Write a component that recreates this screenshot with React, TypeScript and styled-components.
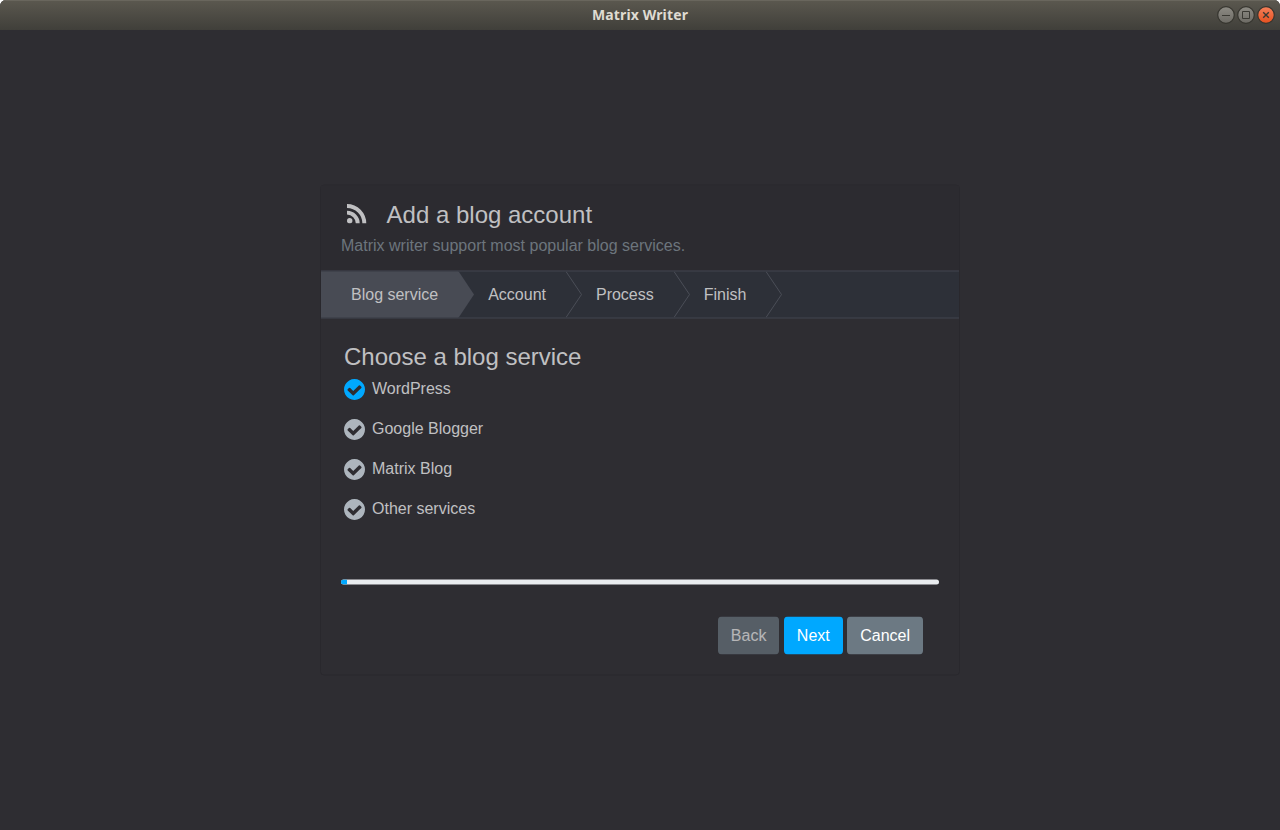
import React from "react";
import styled, { createGlobalStyle } from "styled-components";

const Global = createGlobalStyle`
  * { box-sizing: border-box; }
  body { margin: 0; background: #fff; font-family: "Liberation Sans", Arial, sans-serif; font-size: 16px; line-height: 24px; color: #c0c0c2; }
  h1, h2, p, ol, ul { margin: 0; padding: 0; list-style: none; font-weight: 400; }
`;

const Window = styled.div`
  height: 830px;
  display: flex;
  flex-direction: column;
  overflow: hidden;
  border-radius: 6px 6px 0 0;
  background: #2e2d32;
`;
const TitleBar = styled.header`
  height: 30px;
  flex: none;
  display: grid;
  grid-template-columns: 1fr auto 1fr;
  align-items: center;
  padding-right: 5px;
  background: linear-gradient(#5b584f, #403f3a);
  box-shadow: inset 0 1px #69665d;
`;
const WindowTitle = styled.div`
  grid-column: 2;
  padding-left: 5px;
  font: 700 14px/30px "Noto Sans", "Open Sans", sans-serif;
  letter-spacing: 0.13px;
  color: #dfdbd2;
`;
const Controls = styled.div`
  display: flex;
  justify-content: flex-end;
  gap: 2px;
`;
const Control = styled.svg`
  display: block;
  width: 18px;
  height: 18px;
`;
const Stage = styled.main`
  flex: 1;
  display: flex;
  align-items: flex-start;
  justify-content: center;
  padding-top: 154px;
`;
const Card = styled.section`
  width: 640px;
  height: 491px;
  display: flex;
  flex-direction: column;
  border: 1px solid #29282d;
  border-radius: 4px;
  transform: translateY(0.5px);
`;
const CardHeader = styled.div`
  height: 85px;
  padding: 11px 20px 12px;
  background: #2c2b30;
`;
const Heading = styled.h1`
  display: flex;
  align-items: center;
  height: 36px;
  padding-left: 6px;
  font-size: 24px;
  line-height: 36px;
`;
const FeedIcon = styled.svg`
  width: 20px;
  height: 20px;
  margin: -2px 19.6px 0 0;
  fill: #c0c0c2;
`;
const Subtitle = styled.p`
  padding-top: 1px;
  color: #6c757d;
`;
const Steps = styled.ol`
  display: flex;
  height: 48px;
  background: #2d3038;
  border: solid #42444f;
  border-width: 1px 0;
`;
const Step = styled.li<{ $active?: boolean }>`
  position: relative;
  padding: 0 20px 0 30px;
  line-height: 46px;
  background: ${(p) => (p.$active ? "#484b54" : "transparent")};
`;
const Arrow = styled.svg<{ $active?: boolean }>`
  position: absolute;
  left: 100%;
  top: 0;
  width: 17px;
  height: 46px;
  fill: ${(p) => (p.$active ? "#484b54" : "none")};
  stroke: ${(p) => (p.$active ? "none" : "#4b4e57")};
`;
const Body = styled.div`
  flex: 1;
  padding: 20px 20px 0;
`;
const Question = styled.h2`
  padding-left: 3px;
  font-size: 24px;
  line-height: 36px;
`;
const Options = styled.ul`
  padding-left: 3px;
`;
const Option = styled.li`
  display: flex;
  gap: 7px;
  height: 40px;
`;
const CheckIcon = styled.svg<{ $on?: boolean }>`
  width: 21px;
  height: 22px;
  margin-top: 4px;
  fill: ${(p) => (p.$on ? "#00a8ff" : "#adb5bd")};
`;
const Label = styled.span`
  padding-top: 2px;
`;
const Track = styled.div`
  height: 5px;
  margin-top: 45px;
  border-radius: 3px;
  overflow: hidden;
  background: #e9ecef;
`;
const Fill = styled.div`
  width: 1%;
  height: 100%;
  background: #00a8ff;
`;
const Actions = styled.div`
  display: flex;
  justify-content: flex-end;
  gap: 4.45px;
  padding: 32px 16px 0 0;
`;
const Button = styled.button<{ $primary?: boolean }>`
  height: 38px;
  padding: 6px 12px;
  border: 1px solid transparent;
  border-radius: 4px;
  font: inherit;
  color: #fff;
  background: ${(p) => (p.$primary ? "#00a8ff" : "#6c7983")};
  &:disabled { opacity: 0.65; }
`;

const steps = ["Blog service", "Account", "Process", "Finish"];
const services = ["WordPress", "Google Blogger", "Matrix Blog", "Other services"];

const controls = [
  { name: "minimize", fill: "url(#grey)", glyph: <path d="M5 9.5h8" /> },
  { name: "maximize", fill: "url(#grey)", glyph: <path d="M5.5 5.5h7v7h-7z" /> },
  { name: "close", fill: "url(#orange)", glyph: <path d="M6.2 6.2l5.6 5.6m0-5.6l-5.6 5.6" strokeWidth="1.4" /> },
];

export default function App() {
  return (
    <Window>
      <Global />
      <TitleBar>
        <WindowTitle>Matrix Writer</WindowTitle>
        <Controls>
          {controls.map((c) => (
            <Control key={c.name} viewBox="0 0 18 18" aria-label={c.name}>
              <defs>
                <linearGradient id="grey" x2="0" y2="1">
                  <stop stopColor="#8d8b84" />
                  <stop offset="1" stopColor="#6c6a64" />
                </linearGradient>
                <linearGradient id="orange" x2="0" y2="1">
                  <stop stopColor="#f5805a" />
                  <stop offset="1" stopColor="#e6501f" />
                </linearGradient>
              </defs>
              <circle cx="9" cy="9" r="8.3" fill={c.fill} stroke="#36352f" strokeWidth="1.2" />
              <g fill="none" stroke="#3a3933">{c.glyph}</g>
            </Control>
          ))}
        </Controls>
      </TitleBar>
      <Stage>
        <Card>
          <CardHeader>
            <Heading>
              <FeedIcon viewBox="0 -0.6 20 20">
                <circle cx="2.7" cy="16.6" r="2.7" />
                <path d="M0 0A19.3 19.3 0 0 1 19.3 19.3H15.4A15.4 15.4 0 0 0 0 3.9zM0 6.6A12.7 12.7 0 0 1 12.7 19.3H8.8A8.8 8.8 0 0 0 0 10.5z" />
              </FeedIcon>
              Add a blog account
            </Heading>
            <Subtitle>Matrix writer support most popular blog services.</Subtitle>
          </CardHeader>
          <Steps>
            {steps.map((s, i) => (
              <Step key={s} $active={i === 0}>
                {s}
                <Arrow $active={i === 0} viewBox="0 0 17 46">
                  <path d={i === 0 ? "M0 0H.7L16 23L.7 46H0z" : "M0 0L15.5 23L0 46"} />
                </Arrow>
              </Step>
            ))}
          </Steps>
          <Body>
            <Question>Choose a blog service</Question>
            <Options>
              {services.map((s, i) => (
                <Option key={s}>
                  <CheckIcon $on={i === 0} viewBox="128 91 1536 1609">
                    <path d="M1412 734q0-28-18-46l-91-90q-19-19-45-19t-45 19l-408 407-226-226q-19-19-45-19t-45 19l-91 90q-18 18-18 46 0 27 18 45l362 362q19 19 45 19 27 0 46-19l543-543q18-18 18-45zm252 162q0 209-103 385.5t-279.5 279.5-385.5 103-385.5-103-279.5-279.5-103-385.5 103-385.5 279.5-279.5 385.5-103 385.5 103 279.5 279.5 103 385.5z" />
                  </CheckIcon>
                  <Label>{s}</Label>
                </Option>
              ))}
            </Options>
            <Track>
              <Fill />
            </Track>
            <Actions>
              <Button disabled>Back</Button>
              <Button $primary>Next</Button>
              <Button>Cancel</Button>
            </Actions>
          </Body>
        </Card>
      </Stage>
    </Window>
  );
}
